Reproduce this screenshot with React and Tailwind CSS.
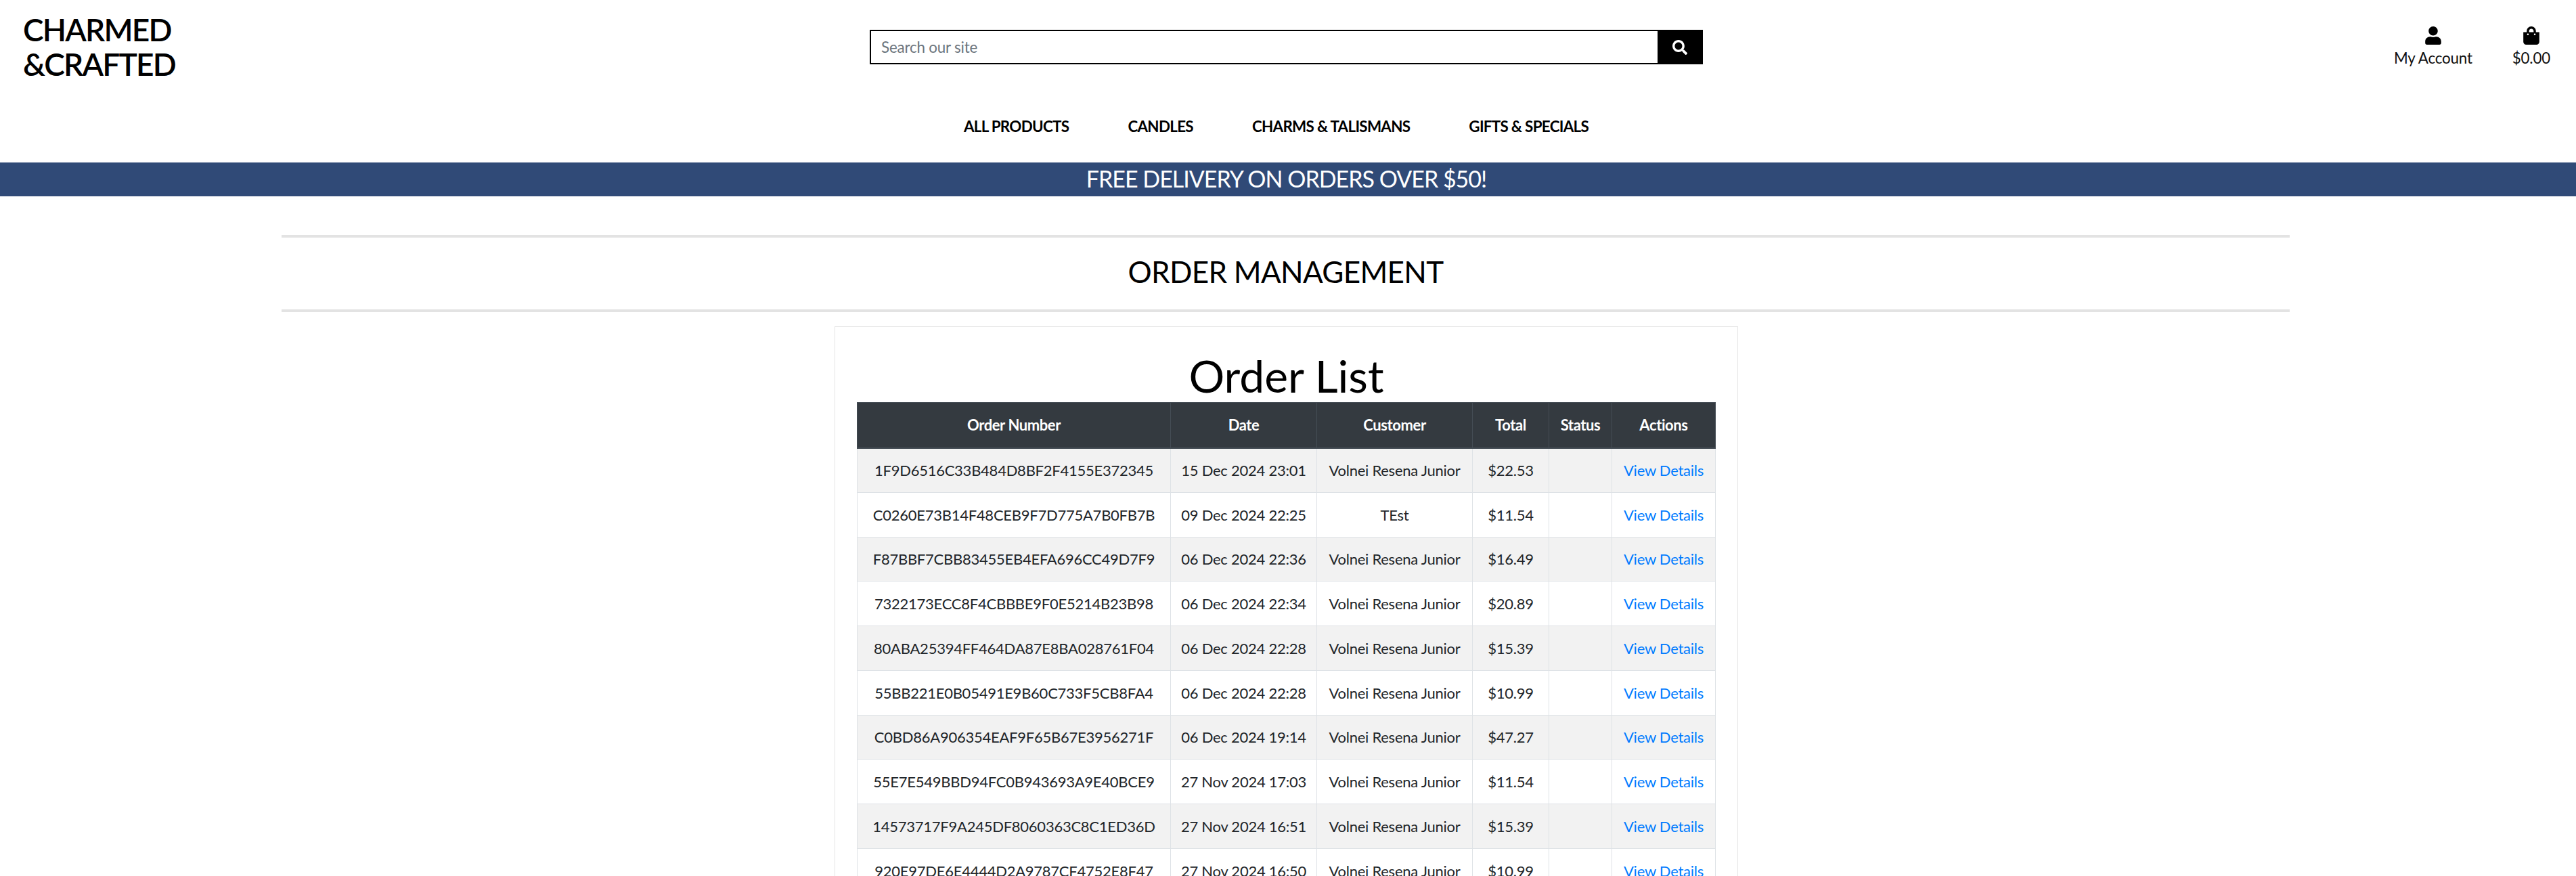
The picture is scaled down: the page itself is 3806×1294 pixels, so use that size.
import React from "react";
import { FaSearch, FaUser, FaShoppingBag } from "react-icons/fa";

const navLinks = ["ALL PRODUCTS", "CANDLES", "CHARMS & TALISMANS", "GIFTS & SPECIALS"];

const orders = [
  ["1F9D6516C33B484D8BF2F4155E372345", "15 Dec 2024 23:01", "Volnei Resena Junior", "$22.53"],
  ["C0260E73B14F48CEB9F7D775A7B0FB7B", "09 Dec 2024 22:25", "TEst", "$11.54"],
  ["F87BBF7CBB83455EB4EFA696CC49D7F9", "06 Dec 2024 22:36", "Volnei Resena Junior", "$16.49"],
  ["7322173ECC8F4CBBBE9F0E5214B23B98", "06 Dec 2024 22:34", "Volnei Resena Junior", "$20.89"],
  ["80ABA25394FF464DA87E8BA028761F04", "06 Dec 2024 22:28", "Volnei Resena Junior", "$15.39"],
  ["55BB221E0B05491E9B60C733F5CB8FA4", "06 Dec 2024 22:28", "Volnei Resena Junior", "$10.99"],
  ["C0BD86A906354EAF9F65B67E3956271F", "06 Dec 2024 19:14", "Volnei Resena Junior", "$47.27"],
  ["55E7E549BBD94FC0B943693A9E40BCE9", "27 Nov 2024 17:03", "Volnei Resena Junior", "$11.54"],
  ["14573717F9A245DF8060363C8C1ED36D", "27 Nov 2024 16:51", "Volnei Resena Junior", "$15.39"],
  ["920E97DE6E4444D2A9787CF4752E8F47", "27 Nov 2024 16:50", "Volnei Resena Junior", "$10.99"],
];

const headers = ["Order Number", "Date", "Customer", "Total", "Status", "Actions"];

const App = () => {
  return (
    <div className="h-screen overflow-hidden bg-white text-black font-['Lato','Liberation_Sans',sans-serif]">
      <header className="grid grid-cols-[1285px_1231px_1fr] pt-[18px]">
        <a className="pl-[34px] text-[46px] leading-[51px] font-semibold tracking-[-1.8px] text-black">
          CHARMED
          <br />
          &amp;CRAFTED
        </a>
        <form className="mt-[26px] flex h-[51px] border-2 border-black">
          <input
            type="text"
            placeholder="Search our site"
            className="min-w-0 flex-1 bg-white px-[15px] text-[22.4px] tracking-[-0.2px] placeholder:text-[#6c757d] outline-none"
          />
          <button type="button" className="flex w-[65px] items-center justify-center bg-black text-white">
            <FaSearch className="h-[22px] w-[22px]" />
          </button>
        </form>
        <div className="flex justify-end gap-[59px] pr-[38px] pt-[21px] text-[22.4px] leading-[28px] tracking-[-0.2px] text-[#111]">
          <a className="flex flex-col items-center">
            <FaUser className="h-[27px] w-[24px] text-black" />
            <span className="mt-[6px]">My Account</span>
          </a>
          <a className="flex flex-col items-center">
            <FaShoppingBag className="h-[27px] w-[24px] text-black" />
            <span className="mt-[6px]">$0.00</span>
          </a>
        </div>
      </header>

      <nav className="mt-[52px] flex justify-center gap-[87px] pr-[35px] text-[22.4px] font-bold leading-[30px] tracking-[-0.7px]">
        {navLinks.map((link) => (
          <a key={link}>{link}</a>
        ))}
      </nav>

      <div className="mt-[38px] flex h-[50px] items-center justify-center bg-[#304a77] pb-[3px] pr-[5px] text-[34px] tracking-[-1px] text-white">
        FREE DELIVERY ON ORDERS OVER $50!
      </div>

      <main>
        <div className="ml-[416px] mr-[423px] mt-[57px] flex h-[114px] items-center justify-center border-y-4 border-[#e3e3e3] pb-[6px]">
          <h2 className="text-[44px] tracking-[-0.7px]">ORDER MANAGEMENT</h2>
        </div>

        <div className="ml-[1233px] mt-[21px] w-[1335px] border border-[#e6e6e6] px-[32px] pt-[32px]">
          <h1 className="text-center text-[66px] leading-[79px]">Order List</h1>
          <table className="w-[1268px] table-fixed border-collapse text-center text-[22px] tracking-[-0.25px] text-[#212529]">
            <colgroup>
              <col className="w-[463px]" />
              <col className="w-[216px]" />
              <col className="w-[230px]" />
              <col className="w-[113px]" />
              <col className="w-[93px]" />
              <col className="w-[153px]" />
            </colgroup>
            <thead>
              <tr className="h-[67px] bg-[#343a40] text-white">
                {headers.map((h) => (
                  <th key={h} className="border border-[#454d55] border-b-2 font-bold tracking-[-0.4px]">
                    {h}
                  </th>
                ))}
              </tr>
            </thead>
            <tbody>
              {orders.map((order, i) => (
                <tr key={order[0]} className={`h-[65.75px] ${i % 2 === 0 ? "bg-[#f2f2f2]" : "bg-white"}`}>
                  {order.map((value, j) => (
                    <td key={j} className="border border-[#dee2e6]">
                      {value}
                    </td>
                  ))}
                  <td className="border border-[#dee2e6]"></td>
                  <td className="border border-[#dee2e6]">
                    <a className="text-[#007bff]">View Details</a>
                  </td>
                </tr>
              ))}
            </tbody>
          </table>
        </div>
      </main>
    </div>
  );
};

export default App;
